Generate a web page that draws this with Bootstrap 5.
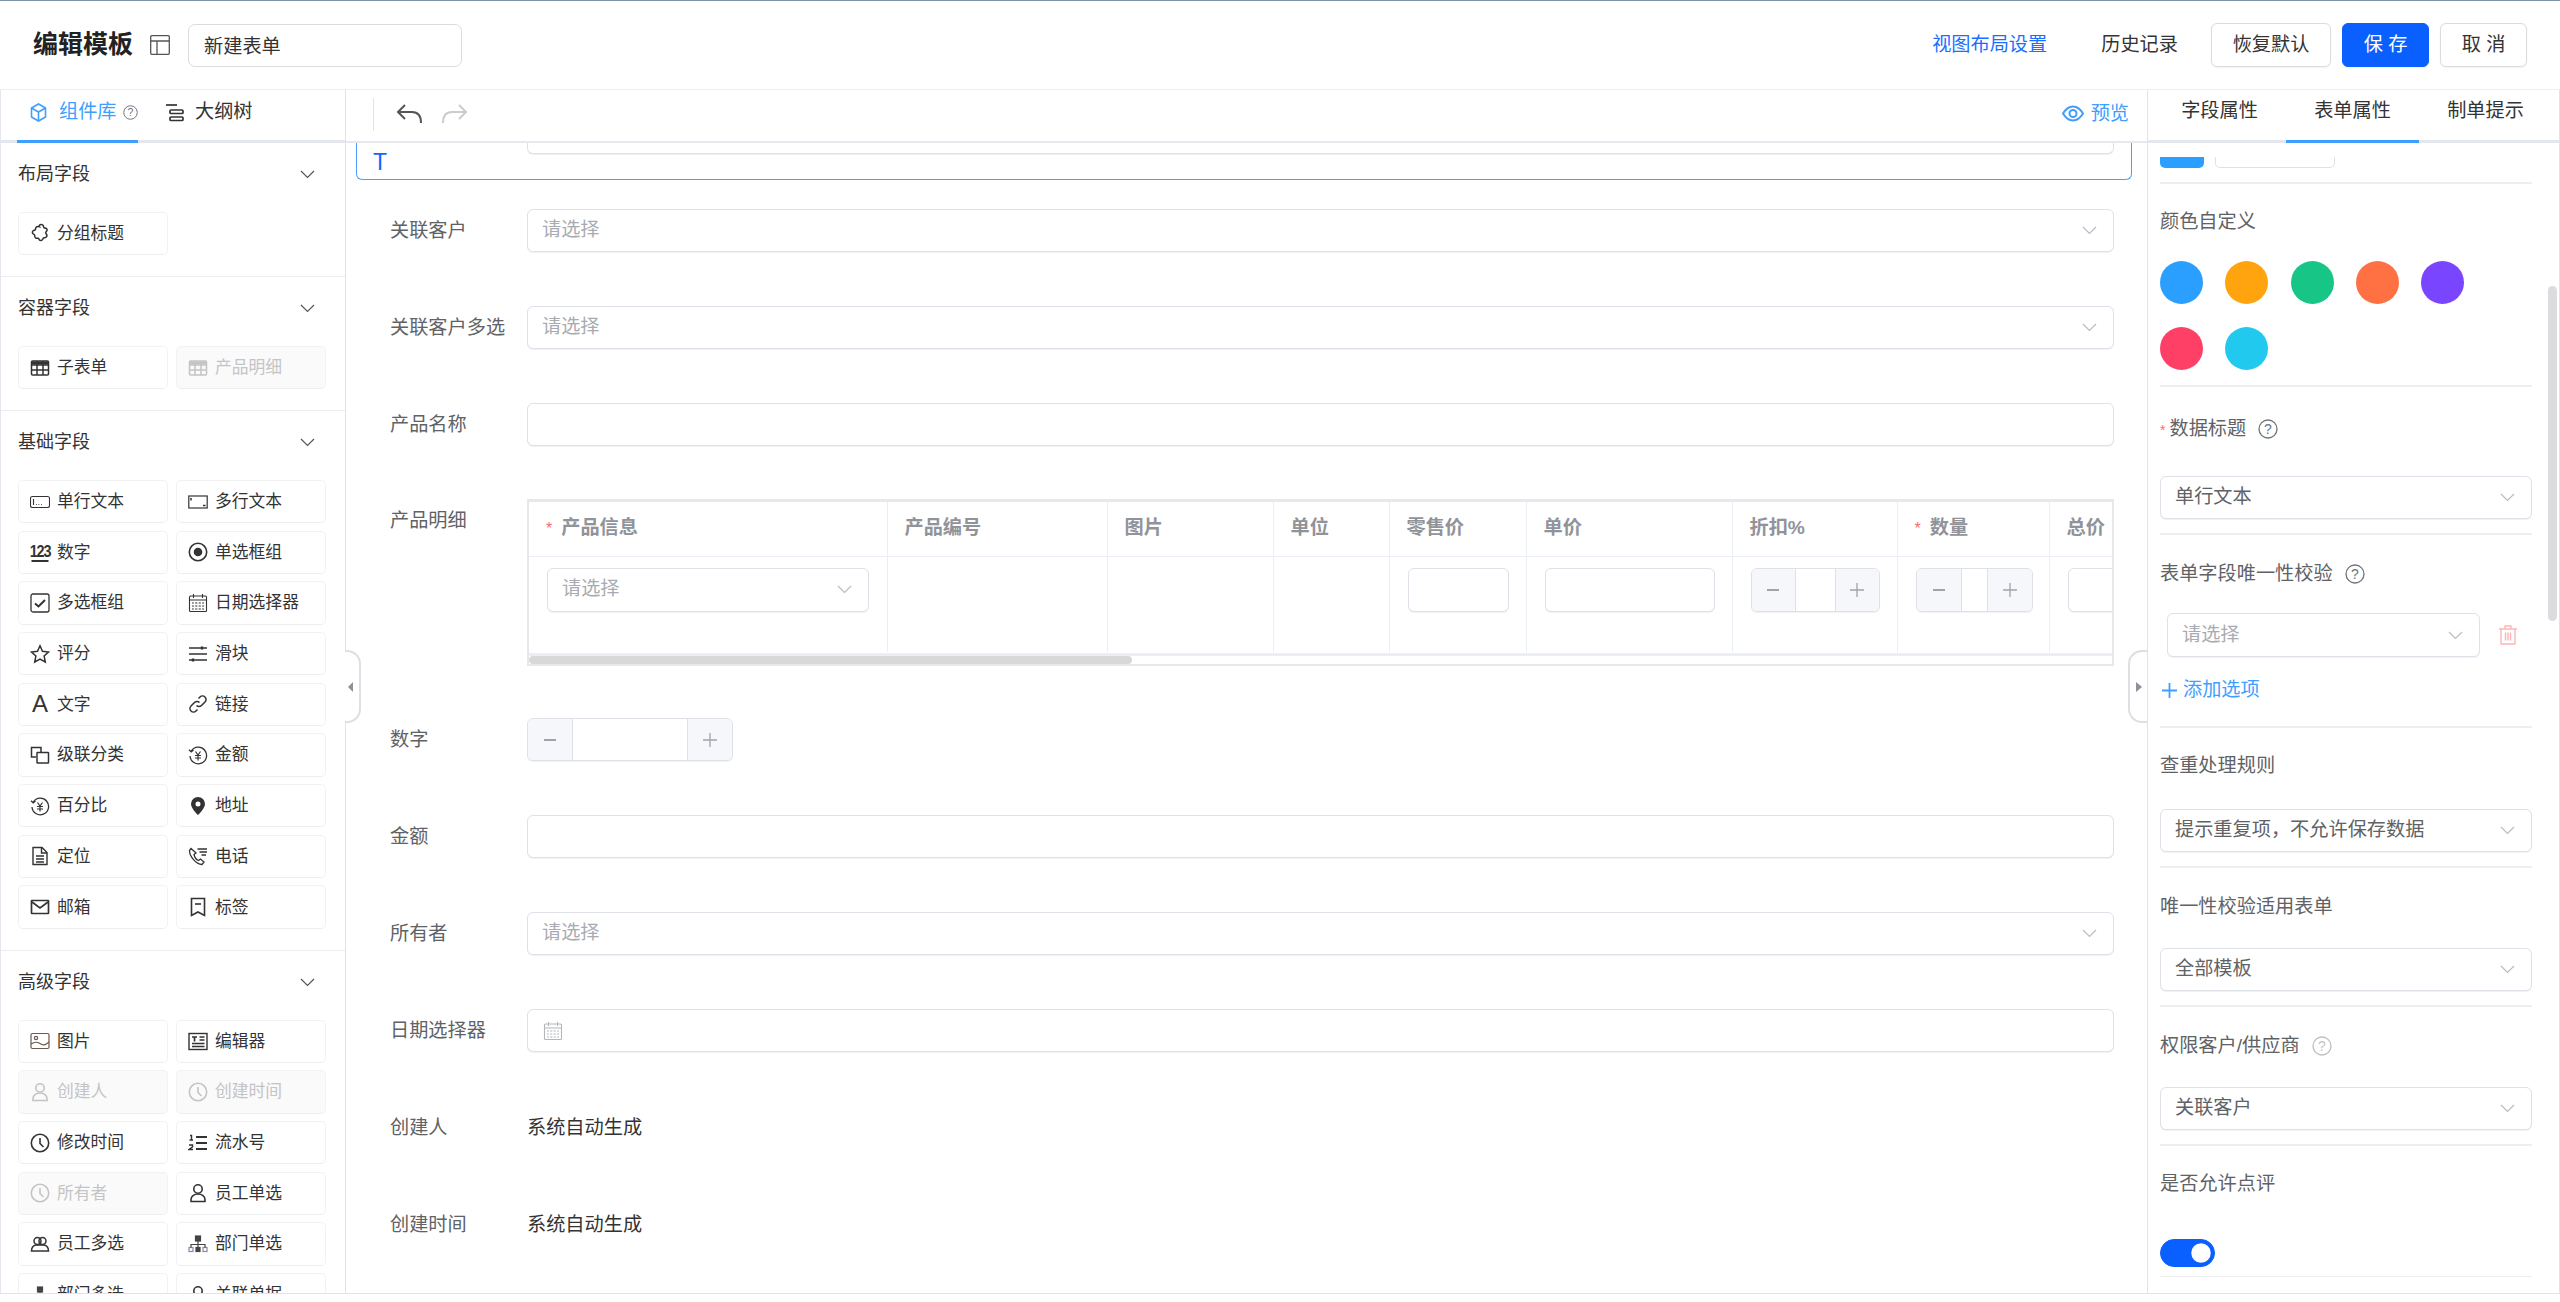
<!DOCTYPE html>
<html lang="zh-CN">
<head>
<meta charset="utf-8">
<title>编辑模板</title>
<link href="https://cdn.jsdelivr.net/npm/bootstrap@5.3.0/dist/css/bootstrap.min.css" rel="stylesheet">
<style>
:root{--ln:#dfe1e8;--sep:#eeeeef;--blue:#409eff;--royal:#0a60ff;--lab:#606266;}
html,body{height:1302px;overflow:hidden;background:#fff;}
body{font-family:"Liberation Sans","Noto Sans CJK SC",sans-serif;font-size:19.2px;color:#333;}
.frame{height:1294px;border-top:1px solid #7d97a8;border-bottom:1px solid #e3e3e5;}
.topbar{height:89px;border-bottom:1px solid #eceef2;padding-left:33px;padding-right:33px;}
.page-title{font-size:25px;font-weight:700;color:#222;margin-right:17px;white-space:nowrap;}
.tpl-name{width:274px;height:43px;margin-left:18px;font-size:19.2px;padding:0 15px;border-color:#dcdcdf;border-radius:7px;color:#333;}
.top-link{font-size:19.2px;color:#1a6fff;text-decoration:none;margin-right:54px;}
.top-link.plain{color:#333;margin-right:22px;}
.top-btn{height:44px;font-size:19.2px;border:1px solid #dcdcdf;border-radius:6px;color:#333;padding:0;margin-left:11px;background:#fff;box-shadow:0 1px 2px rgba(0,0,0,.05);}
.w120{width:120px;}.w87{width:87px;}
.top-btn.go{background:var(--royal);border-color:var(--royal);color:#fff;}
.workzone{flex:1;min-height:0;}
.leftpane{width:346px;border-left:1px solid #e4e7ed;border-right:1px solid #e2e3e6;overflow:hidden;flex:none;}
.rightpane{width:413px;border-left:1px solid #e2e3e6;border-right:1px solid #e2e3e6;overflow:hidden;flex:none;}
.midpane{flex:1;min-width:0;overflow:hidden;}
.pane-tabs{height:53px;border-bottom:3px solid #e4e7ed;flex-wrap:nowrap;}
.pane-tabs .nav-link{height:53px;padding:0 0 6px;color:#333;font-size:19.2px;display:flex;align-items:center;justify-content:flex-start;border-bottom:3px solid transparent;white-space:nowrap;}
.pane-tabs .nav-link svg{flex:none;}
.pane-tabs .nav-link.active{border-bottom-color:var(--blue);}
.lt-a{width:121px;margin-left:16px;color:var(--blue)!important;padding-left:13px!important;}
.lt-a .tab-lb{margin-left:12px;margin-right:6px;}
.lt-b{width:100px;margin-left:27px;gap:11px;}
.rt-nav{padding-left:5px;}
.rt-tab{width:133px;justify-content:center!important;padding-bottom:8px!important;}
.midbar{height:53px;border-bottom:2px solid #e6e8ee;padding-right:18px;padding-bottom:3px;}
.vbar{width:1px;height:33px;background:#e3e3e6;margin-left:27px;margin-right:22px;}
.preview-l{color:var(--blue);font-size:19.2px;text-decoration:none;gap:7px;}
.fld-sec{padding:15.8px 0 21px 17px;border-bottom:1px solid #ebedf3;}
.sec-head{height:32px;font-size:18px;color:#333;padding-right:30px;margin-bottom:21px;}
.fld-grid{display:grid;grid-template-columns:150px 150px;gap:7.4px 8px;}
.chip{height:43.3px;border:1px solid #f2f2f4;border-bottom-color:#edeef1;border-radius:5px;font-size:16.8px;color:#333;padding-left:11px;gap:7px;white-space:nowrap;background:#fff;}
.chip svg,.chip .gl{width:20px;height:20px;flex:none;}
.chip.off{background:#fafafa;color:#c4c4c6;}
.gl{display:flex;align-items:center;justify-content:center;line-height:1;}
.gl-123{font-size:17px;font-weight:700;letter-spacing:-1.5px;border-bottom:2px solid #333;height:19px!important;transform:scaleX(.85);}
.gl-a{font-size:24px;}
.cv-top{height:37px;margin:0 15px 29px 10px;border:1px solid #4a9fff;border-top:0;border-radius:0 0 6px 6px;padding-left:16px;}
.cv-t{width:154px;color:#1466ff;font-size:23px;line-height:1;padding-top:8px;}
.cv-stub{flex:1;height:11px;margin-right:17px;border:1px solid var(--ln);border-top:0;border-radius:0 0 6px 6px;box-shadow:0 1px 0 #f1f1f4;}
.fm-row{margin-left:44px;margin-right:33px;margin-bottom:54px;}
.fm-row.tight{margin-bottom:53px;}
.fm-row.short{margin-bottom:52px;}
.fm-lab{width:137px;flex:none;height:43px;line-height:43px;color:var(--lab);font-size:19.2px;white-space:nowrap;}
.fm-auto{height:43px;line-height:43px;color:#333;font-size:19.2px;}
.fld{height:43px;font-size:19.2px;padding:0 44px 0 14px;border:1px solid var(--ln);border-radius:6px;color:var(--lab);box-shadow:0 1px 0 #f2f2f5;background-color:#fff;}
.form-select.fld{background-image:url("data:image/svg+xml,%3Csvg xmlns='http://www.w3.org/2000/svg' viewBox='0 0 15 9'%3E%3Cpath d='M1 1l6.500 6.500L14 1' fill='none' stroke='%23b8bcc4' stroke-width='1.200'/%3E%3C/svg%3E");background-size:15px 9px;background-position:right 16px center;}
.fld.ph{color:#a8abb2;}
.fld-date{padding-left:15px;color:#b4b6bb;}
.tbl-wrap{width:1587px;height:167px;overflow:hidden;border:2px solid #e8e8ea;border-top-width:3px;border-right-width:2px;}
.tbl-clip{overflow:hidden;height:151px;}
.dtl{table-layout:fixed;width:1640px;margin:0;border-collapse:collapse;}
.c1{width:358px}.c2{width:220px}.c3{width:166px}.c4{width:116px}.c5{width:137px}.c6{width:206px}.c7{width:165px}.c8{width:152px}.c9{width:120px}
.dtl th,.dtl td{border:0;border-right:1px solid #ebeef5;padding:0;vertical-align:top;}
.dtl th{height:54px;border-bottom:1px solid #ebeef5;font-size:19.2px;color:#909399;font-weight:700;vertical-align:middle;padding-left:17px;white-space:nowrap;}
.dtl td{height:96px;padding-top:11px;padding-left:18px;padding-right:0;}
.req{color:#f56c6c;font-weight:400;font-size:16px;margin-right:9px;}
.tb-sel{width:322px;height:44px;}
.tb-in{height:44px;padding:0;}
.w101{width:101px;}.w170{width:170px;}.w130{width:120px;}
.hscroll{height:8px;border-top:0;}
.hs-rule{height:3px;background:#ebeef5;}
.hs-thumb{height:8px;background:#d8d8d8;border-radius:4px;}
.stepper{height:44px;border:1px solid var(--ln);border-radius:6px;overflow:hidden;background:#fff;box-shadow:0 1px 0 #f2f2f5;}
.stepper .stp{flex:none;background:#f5f7fa;display:flex;align-items:center;justify-content:center;}
.stepper .stp:first-child{border-right:1px solid var(--ln);}
.stepper .stp:last-child{border-left:1px solid var(--ln);}
.st-main{width:206px;height:43px;}.st-main .stp{width:45px;}
.st-sm{width:129px;}.st-sm .stp{width:44px;}
.st-xs{width:117px;}.st-xs .stp{width:45px;}
.stp-fill{flex:1;}
.rp-body{padding:0 27px 0 12px;position:relative;}
.sep{border-top:2px solid var(--sep);}
.sep.thin{border-top-width:1px;}
.stub-a{width:44px;height:11px;background:#2a9fff;border-radius:0 0 5px 5px;}
.stub-b{width:120px;height:11px;border:1px solid var(--ln);border-top:0;border-radius:0 0 5px 5px;}
.stubs{gap:11px;margin-top:14px;}
.rlab{height:30px;line-height:30px;color:var(--lab);font-size:19.2px;white-space:nowrap;}
.rlab .rq{color:#f56c6c;font-size:14px;margin-right:4px;}
.rlab svg{margin-left:12px;}
.swatches{display:flex;flex-wrap:wrap;width:340px;column-gap:22.3px;row-gap:23px;}
.swatch{width:43px;height:43px;border-radius:50%;}
.s1{background:#2a9fff}.s2{background:#ffa30f}.s3{background:#17c586}.s4{background:#ff7043}.s5{background:#7a45ff}.s6{background:#ff4066}.s7{background:#22c9ef}
.add-opt{height:30px;color:var(--blue);font-size:19.2px;gap:6px;margin-left:2px;}
.uq-sel{margin-left:7px;width:313px;}
.uq-sel .fld{height:44px;}
.trash{margin-left:19px;}
.m9{margin-top:9px}.m14{margin-top:14px}.m15{margin-top:15px}.m16{margin-top:16px}.m17{margin-top:17px}.m18{margin-top:18px}.m21{margin-top:21px}.m23{margin-top:23px}.m24{margin-top:24px}.m25{margin-top:25px}.m26{margin-top:26px}.m27{margin-top:27px}.m28{margin-top:28px}.m32{margin-top:32px}.m40{margin-top:40px}
.sw-wrap .form-check-input{width:55px;height:28px;margin:0;background-color:var(--royal);border-color:var(--royal);float:none;box-shadow:none;}
.rp-thumb{position:absolute;left:400px;top:129px;width:9px;height:335px;background:#dcdcdf;border-radius:5px;}
.edge{position:absolute;top:560px;height:73px;background:#fff;border:2px solid #dedfe2;display:flex;align-items:center;}
.edge-l{left:345px;width:16px;border-left:0;border-radius:0 14px 14px 0;padding-left:3px;}
.edge-r{left:2128px;width:19px;border-right:0;border-radius:14px 0 0 14px;padding-left:6px;}
.tri-l{width:0;height:0;border:5px solid transparent;border-left:0;border-right:5px solid #8c9098;}
.tri-r{width:0;height:0;border:5px solid transparent;border-right:0;border-left:6px solid #8c9098;}
</style>
</head>
<body>
<svg width="0" height="0" class="d-block" aria-hidden="true">
<defs>
<g id="i-group" fill="none" stroke="currentColor" stroke-width="1.500"><path d="M9 3.500a2.300 2.300 0 0 1 4.300-.8c.4.800.2 1.600.7 2.100.6.500 1.700.1 2.500.8 1 .9.700 2.400-.5 3.200-.5.400-.5.900-.1 1.400 1 1.200 1.300 3 .2 4-.8.700-1.700.5-2.300.5-.6.100-.7.900-1.100 1.700-.8 1.400-2.700 1.500-3.500.3-.4-.6-.3-1.300-.9-1.500-.8-.2-1.900.3-2.800-.4-.9-.8-.7-2-.8-2.600-.1-.6-1-.8-1.700-1.500-1-1-.7-2.500.4-3.100.7-.4 1.500-.3 1.900-.8.400-.6.100-1.400.6-2.200.7-1 2-1.100 3.300-.9z"/></g>
<g id="i-table" fill="none" stroke="currentColor" stroke-width="1.500"><rect x="1.500" y="3" width="17" height="14" rx="1"/><path d="M1.500 7h17M1.500 12h17M7 3v14M13 3v14" /><path d="M1.500 5h17" stroke-width="3"/></g>
<g id="i-input" fill="none" stroke="currentColor" stroke-width="1.100"><rect x=".5" y="4.500" width="19" height="11" rx="2"/><path d="M3.500 7v6" /><path d="M6 12.500h.8M8.500 12.500h.8M11 12.500h.8" /></g>
<g id="i-text" fill="none" stroke="currentColor" stroke-width="1.200"><rect x=".8" y="4" width="18.400" height="12"/><path d="M3 6v2.500M15 13.500h2.500" stroke-width="1.500"/></g>
<g id="i-radio" fill="none" stroke="currentColor"><circle cx="10" cy="10" r="8.700" stroke-width="1.600"/><circle cx="10" cy="10" r="4.300" fill="currentColor" stroke="none"/></g>
<g id="i-check" fill="none" stroke="currentColor"><rect x="1" y="1" width="18" height="18" rx="2" stroke-width="1.300"/><path d="M5 10.500l3.500 3L15 7" stroke-width="2"/></g>
<g id="i-cal" fill="none" stroke="currentColor" stroke-width="1.100"><rect x="1.500" y="3" width="17" height="15.500" rx="1"/><path d="M1.500 7h17M5.500 1v4M14.500 1v4M4 10h12M4 13h12M4 16h12" /><path d="M6.500 9v8M10 9v8M13.500 9v8" stroke="#fff" stroke-width="1.300"/></g>
<g id="i-star" fill="none" stroke="currentColor" stroke-width="1.500"><path d="M10 1.800l2.500 5.500 6 .7-4.400 4 1.200 6L10 15l-5.300 3 1.200-6-4.400-4 6-.7z"/></g>
<g id="i-slider" fill="none" stroke="currentColor" stroke-width="1.400"><path d="M1 4h18M1 10h18M1 16h18"/><path d="M14 2.500v3M5 14.500v3" stroke-width="2.400"/></g>
<g id="i-link" fill="none" stroke="currentColor" stroke-width="1.500"><path d="M8.500 11.500a3.500 3.500 0 0 0 5 0l3.500-3.500a3.500 3.500 0 0 0-5-5l-1.500 1.500"/><path d="M11.500 8.500a3.500 3.500 0 0 0-5 0L3 12a3.500 3.500 0 0 0 5 5l1.500-1.500"/></g>
<g id="i-casc" fill="none" stroke="currentColor" stroke-width="1.500"><path d="M6 12H1.500V2.500H11V7"/><rect x="7" y="7.500" width="11.500" height="10.500" rx=".5"/></g>
<g id="i-money" fill="none" stroke="currentColor" stroke-width="1.300"><path d="M3.300 6A8.300 8.300 0 1 1 2 11"/><path d="M1 4.800l2.200 2 2.300-1.800" /><path d="M7.500 6.500l2.500 3.500 2.500-3.500M7 10.500h6M7 13h6M10 10v5.500" stroke-width="1.200"/></g>
<g id="i-pin"><path fill="currentColor" fill-rule="evenodd" d="M10 1a7 7 0 0 0-7 7c0 4.500 7 11 7 11s7-6.500 7-11a7 7 0 0 0-7-7zm0 4.500a2.500 2.500 0 1 1 0 5 2.500 2.500 0 0 1 0-5z"/></g>
<g id="i-doc" fill="none" stroke="currentColor" stroke-width="1.400"><path d="M3 1.500h9l5 5v12H3z"/><path d="M11.500 1.500v5.500H17M6 10h8M6 13h8M6 16h8"/></g>
<g id="i-phone" fill="none" stroke="currentColor" stroke-width="1.300"><path d="M3 2.500L1.500 4.500c0 6 6.500 13.500 12.500 14l2-2.500-3.500-3-2 1.500C8 13.500 6.500 11 6 8.500L8 7z"/><path d="M9.500 3H19M11.500 6H19M13.500 9H18"/></g>
<g id="i-mail" fill="none" stroke="currentColor" stroke-width="1.700"><rect x="1.500" y="3.500" width="17" height="13" rx=".5"/><path d="M2 5l8 6 8-6"/></g>
<g id="i-mark" fill="none" stroke="currentColor" stroke-width="1.600"><path d="M3.500 1.500h13v17l-6.500-3.500-6.500 3.500z"/><path d="M7 7h6"/></g>
<g id="i-img" fill="none" stroke="#6b5a4e" stroke-width="1.200"><rect x="1" y="2.500" width="18" height="15" rx="1.500"/><circle cx="6" cy="7" r="1.600"/><path d="M1 13c4-2.500 6-2.500 9-.5s5 2 9-1.500"/></g>
<g id="i-edit" fill="none" stroke="currentColor" stroke-width="1.400"><rect x="1" y="2.500" width="18" height="16"/><path d="M11.500 6h5M11.500 9h5M4 12.500h12.500M4 15.500h12.500"/><path d="M4 6h5M6.500 6v4.500" stroke-width="1.700"/></g>
<g id="i-user" fill="none" stroke="currentColor" stroke-width="1.600"><circle cx="10" cy="6" r="4.200"/><path d="M3 18.500v-2c0-3 3-5.500 7-5.500s7 2.500 7 5.500v2z"/></g>
<g id="i-clock" fill="none" stroke="currentColor" stroke-width="1.600"><circle cx="10" cy="10" r="8.700"/><path d="M10 5v5.500l3.500 3.500"/></g>
<g id="i-list" fill="none" stroke="currentColor"><path d="M8 4h11M8 10h11M8 16h11" stroke-width="2"/><path d="M2 2.500h1.500V7M1.500 7h3.500M1 12h3.500v2l-3.500 2.500h4" stroke-width="1.400"/></g>
<g id="i-users" fill="none" stroke="currentColor" stroke-width="1.500"><circle cx="7.500" cy="7" r="3.500"/><circle cx="12.500" cy="7" r="3.500"/><path d="M1.500 17c0-3.500 2-5.500 4.500-6h8c2.500.5 4.500 2.500 4.500 6z"/></g>
<g id="i-org" fill="none" stroke="#444" stroke-width="1.200"><rect x="7.500" y="2" width="5" height="5" fill="#444"/><rect x="8" y="13.500" width="4" height="4" fill="#444"/><rect x="1" y="13.500" width="4" height="4" stroke="#8a86a8"/><rect x="15" y="13.500" width="4" height="4" stroke="#8a86a8"/><path d="M10 7v6.500M3 13.500v-3h14v3"/></g>
<g id="i-help" fill="none" stroke="currentColor"><circle cx="10" cy="10" r="9" stroke-width="1.300"/><text x="10" y="15" text-anchor="middle" font-size="14" fill="currentColor" stroke="none" font-family="Liberation Sans">?</text></g>
<g id="i-minus"><path d="M2 8h12" stroke="#a0a3aa" stroke-width="1.800"/></g>
<g id="i-plus"><path d="M8 1v14M1 8h14" stroke="#a0a3aa" stroke-width="1.300"/></g>
<g id="i-chev"><path d="M1 1l6.500 6.500L14 1" fill="none" stroke="#555" stroke-width="1.200"/></g>
</defs>
</svg>

<div class="frame d-flex flex-column">
  <header class="topbar d-flex align-items-center flex-shrink-0">
    <span class="page-title">编辑模板</span>
    <svg width="20" height="20" viewBox="0 0 20 20" fill="none" stroke="#555" stroke-width="1.300"><rect x=".7" y=".7" width="18.600" height="18.600" rx="1"/><path d="M.7 6h18.600M7 6v13.300"/></svg>
    <input class="form-control tpl-name" type="text" value="新建表单">
    <div class="ms-auto d-flex align-items-center">
      <a class="top-link" href="#">视图布局设置</a>
      <a class="top-link plain" href="#">历史记录</a>
      <button class="btn top-btn w120" type="button">恢复默认</button>
      <button class="btn top-btn go w87" type="button">保 存</button>
      <button class="btn top-btn w87" type="button">取 消</button>
    </div>
  </header>

  <div class="workzone d-flex position-relative">
    <aside class="leftpane">
      <nav class="nav pane-tabs">
        <a class="nav-link active lt-a" href="#">
          <svg width="17" height="19" viewBox="0 0 17 19" fill="none" stroke="#409eff" stroke-width="1.600"><path d="M8.500 1l7 4v9l-7 4-7-4V5z"/><path d="M1.500 5l7 4 7-4M8.500 9v9"/></svg>
          <span class="tab-lb">组件库</span>
          <svg width="15" height="15" viewBox="0 0 20 20" class="text-secondary"><use href="#i-help"/></svg>
        </a>
        <a class="nav-link lt-b" href="#">
          <svg width="19" height="19" viewBox="0 0 19 19" fill="none" stroke="#333" stroke-width="1.700"><path d="M1 2h11"/><rect x="5" y="7" width="13" height="3.500" rx="1"/><rect x="5" y="14" width="13" height="3.500" rx="1"/></svg>
          大纲树
        </a>
      </nav>

      <section class="fld-sec">
        <div class="sec-head d-flex align-items-center justify-content-between">布局字段<svg width="15" height="9" viewBox="0 0 15 9"><use href="#i-chev"/></svg></div>
        <div class="fld-grid">
          <div class="chip d-flex align-items-center"><svg viewBox="0 0 20 20"><use href="#i-group"/></svg>分组标题</div>
        </div>
      </section>
      <section class="fld-sec">
        <div class="sec-head d-flex align-items-center justify-content-between">容器字段<svg width="15" height="9" viewBox="0 0 15 9"><use href="#i-chev"/></svg></div>
        <div class="fld-grid">
          <div class="chip d-flex align-items-center"><svg viewBox="0 0 20 20"><use href="#i-table"/></svg>子表单</div>
          <div class="chip off d-flex align-items-center"><svg viewBox="0 0 20 20"><use href="#i-table"/></svg>产品明细</div>
        </div>
      </section>
      <section class="fld-sec">
        <div class="sec-head d-flex align-items-center justify-content-between">基础字段<svg width="15" height="9" viewBox="0 0 15 9"><use href="#i-chev"/></svg></div>
        <div class="fld-grid">
          <div class="chip d-flex align-items-center"><svg viewBox="0 0 20 20"><use href="#i-input"/></svg>单行文本</div>
          <div class="chip d-flex align-items-center"><svg viewBox="0 0 20 20"><use href="#i-text"/></svg>多行文本</div>
          <div class="chip d-flex align-items-center"><span class="gl gl-123">123</span>数字</div>
          <div class="chip d-flex align-items-center"><svg viewBox="0 0 20 20"><use href="#i-radio"/></svg>单选框组</div>
          <div class="chip d-flex align-items-center"><svg viewBox="0 0 20 20"><use href="#i-check"/></svg>多选框组</div>
          <div class="chip d-flex align-items-center"><svg viewBox="0 0 20 20"><use href="#i-cal"/></svg>日期选择器</div>
          <div class="chip d-flex align-items-center"><svg viewBox="0 0 20 20"><use href="#i-star"/></svg>评分</div>
          <div class="chip d-flex align-items-center"><svg viewBox="0 0 20 20"><use href="#i-slider"/></svg>滑块</div>
          <div class="chip d-flex align-items-center"><span class="gl gl-a">A</span>文字</div>
          <div class="chip d-flex align-items-center"><svg viewBox="0 0 20 20"><use href="#i-link"/></svg>链接</div>
          <div class="chip d-flex align-items-center"><svg viewBox="0 0 20 20"><use href="#i-casc"/></svg>级联分类</div>
          <div class="chip d-flex align-items-center"><svg viewBox="0 0 20 20"><use href="#i-money"/></svg>金额</div>
          <div class="chip d-flex align-items-center"><svg viewBox="0 0 20 20"><use href="#i-money"/></svg>百分比</div>
          <div class="chip d-flex align-items-center"><svg viewBox="0 0 20 20"><use href="#i-pin"/></svg>地址</div>
          <div class="chip d-flex align-items-center"><svg viewBox="0 0 20 20"><use href="#i-doc"/></svg>定位</div>
          <div class="chip d-flex align-items-center"><svg viewBox="0 0 20 20"><use href="#i-phone"/></svg>电话</div>
          <div class="chip d-flex align-items-center"><svg viewBox="0 0 20 20"><use href="#i-mail"/></svg>邮箱</div>
          <div class="chip d-flex align-items-center"><svg viewBox="0 0 20 20"><use href="#i-mark"/></svg>标签</div>
        </div>
      </section>
      <section class="fld-sec border-0">
        <div class="sec-head d-flex align-items-center justify-content-between">高级字段<svg width="15" height="9" viewBox="0 0 15 9"><use href="#i-chev"/></svg></div>
        <div class="fld-grid">
          <div class="chip d-flex align-items-center"><svg viewBox="0 0 20 20"><use href="#i-img"/></svg>图片</div>
          <div class="chip d-flex align-items-center"><svg viewBox="0 0 20 20"><use href="#i-edit"/></svg>编辑器</div>
          <div class="chip off d-flex align-items-center"><svg viewBox="0 0 20 20"><use href="#i-user"/></svg>创建人</div>
          <div class="chip off d-flex align-items-center"><svg viewBox="0 0 20 20"><use href="#i-clock"/></svg>创建时间</div>
          <div class="chip d-flex align-items-center"><svg viewBox="0 0 20 20"><use href="#i-clock"/></svg>修改时间</div>
          <div class="chip d-flex align-items-center"><svg viewBox="0 0 20 20"><use href="#i-list"/></svg>流水号</div>
          <div class="chip off d-flex align-items-center"><svg viewBox="0 0 20 20"><use href="#i-clock"/></svg>所有者</div>
          <div class="chip d-flex align-items-center"><svg viewBox="0 0 20 20"><use href="#i-user"/></svg>员工单选</div>
          <div class="chip d-flex align-items-center"><svg viewBox="0 0 20 20"><use href="#i-users"/></svg>员工多选</div>
          <div class="chip d-flex align-items-center"><svg viewBox="0 0 20 20"><use href="#i-org"/></svg>部门单选</div>
          <div class="chip d-flex align-items-center"><svg viewBox="0 0 20 20"><use href="#i-org"/></svg>部门多选</div>
          <div class="chip d-flex align-items-center"><svg viewBox="0 0 20 20"><use href="#i-user"/></svg>关联单据</div>
        </div>
      </section>
    </aside>

    <main class="midpane">
      <div class="midbar d-flex align-items-center">
        <span class="vbar"></span>
        <svg width="28" height="22" viewBox="0 0 28 22" fill="none" stroke="#555" stroke-width="2"><path d="M9 2L2 9l7 7"/><path d="M2 9h14c6 0 9 4 9 11"/></svg>
        <svg class="ms-3" width="28" height="22" viewBox="0 0 28 22" fill="none" stroke="#ccc" stroke-width="2"><path d="M19 2l7 7-7 7"/><path d="M26 9H12c-6 0-9 4-9 11"/></svg>
        <a class="preview-l ms-auto d-flex align-items-center" href="#">
          <svg width="22" height="17" viewBox="0 0 22 17" fill="none" stroke="#409eff" stroke-width="2"><path d="M1 8.500C4 3.500 7 1.500 11 1.500s7 2 10 7c-3 5-6 7-10 7s-7-2-10-7z"/><circle cx="11" cy="8.500" r="3.500"/></svg>
          预览
        </a>
      </div>

      <div class="cv-top d-flex">
        <span class="cv-t">T</span>
        <span class="cv-stub"></span>
      </div>

      <div class="fm-row d-flex"><label class="fm-lab">关联客户</label><select class="form-select fld ph"><option>请选择</option></select></div>
      <div class="fm-row d-flex"><label class="fm-lab">关联客户多选</label><select class="form-select fld ph"><option>请选择</option></select></div>
      <div class="fm-row tight d-flex"><label class="fm-lab">产品名称</label><input class="form-control fld" type="text"></div>

      <div class="fm-row short d-flex">
        <label class="fm-lab">产品明细</label>
        <div class="tbl-wrap">
          <div class="tbl-clip">
            <table class="table dtl">
              <colgroup><col class="c1"><col class="c2"><col class="c3"><col class="c4"><col class="c5"><col class="c6"><col class="c7"><col class="c8"><col class="c9"></colgroup>
              <thead><tr>
                <th><span class="req">*</span>产品信息</th><th>产品编号</th><th>图片</th><th>单位</th><th>零售价</th><th>单价</th><th>折扣%</th><th><span class="req">*</span>数量</th><th>总价</th>
              </tr></thead>
              <tbody><tr>
                <td><select class="form-select fld ph tb-sel"><option>请选择</option></select></td>
                <td></td><td></td><td></td>
                <td><input class="form-control fld tb-in w101" type="text"></td>
                <td><input class="form-control fld tb-in w170" type="text"></td>
                <td><div class="stepper st-sm d-flex"><span class="stp"><svg width="16" height="16"><use href="#i-minus"/></svg></span><span class="stp-fill"></span><span class="stp"><svg width="16" height="16"><use href="#i-plus"/></svg></span></div></td>
                <td><div class="stepper st-xs d-flex"><span class="stp"><svg width="16" height="16"><use href="#i-minus"/></svg></span><span class="stp-fill"></span><span class="stp"><svg width="16" height="16"><use href="#i-plus"/></svg></span></div></td>
                <td><input class="form-control fld tb-in w130" type="text"></td>
              </tr></tbody>
            </table>
          </div>
          <div class="hs-rule"></div>
          <div class="hscroll"><div class="hs-thumb" style="width:603px"></div></div>
        </div>
      </div>

      <div class="fm-row d-flex"><label class="fm-lab">数字</label><div class="stepper st-main d-flex"><span class="stp"><svg width="16" height="16"><use href="#i-minus"/></svg></span><span class="stp-fill"></span><span class="stp"><svg width="16" height="16"><use href="#i-plus"/></svg></span></div></div>
      <div class="fm-row d-flex"><label class="fm-lab">金额</label><input class="form-control fld" type="text"></div>
      <div class="fm-row d-flex"><label class="fm-lab">所有者</label><select class="form-select fld ph"><option>请选择</option></select></div>
      <div class="fm-row d-flex"><label class="fm-lab">日期选择器</label>
        <div class="form-control fld fld-date d-flex align-items-center"><svg width="20" height="20" viewBox="0 0 20 20"><use href="#i-cal"/></svg></div>
      </div>
      <div class="fm-row d-flex"><label class="fm-lab">创建人</label><div class="fm-auto">系统自动生成</div></div>
      <div class="fm-row d-flex"><label class="fm-lab">创建时间</label><div class="fm-auto">系统自动生成</div></div>
    </main>

    <aside class="rightpane">
      <nav class="nav pane-tabs rt-nav">
        <a class="nav-link rt-tab" href="#">字段属性</a>
        <a class="nav-link rt-tab active" href="#">表单属性</a>
        <a class="nav-link rt-tab" href="#">制单提示</a>
      </nav>
      <div class="rp-body">
        <div class="stubs d-flex"><span class="stub-a"></span><span class="stub-b"></span></div>
        <div class="sep m14"></div>

        <div class="rlab m23">颜色自定义</div>
        <div class="swatches m24">
          <span class="swatch s1"></span><span class="swatch s2"></span><span class="swatch s3"></span><span class="swatch s4"></span><span class="swatch s5"></span><span class="swatch s6"></span><span class="swatch s7"></span>
        </div>
        <div class="sep m15"></div>

        <div class="rlab m27"><span class="rq">*</span>数据标题<svg width="20" height="20" viewBox="0 0 20 20" class="text-secondary align-text-bottom"><use href="#i-help"/></svg></div>
        <select class="form-select fld m32"><option>单行文本</option></select>
        <div class="sep m14"></div>

        <div class="rlab m24">表单字段唯一性校验<svg width="20" height="20" viewBox="0 0 20 20" class="text-secondary align-text-bottom"><use href="#i-help"/></svg></div>
        <div class="d-flex align-items-center m24">
          <div class="uq-sel"><select class="form-select fld ph"><option>请选择</option></select></div>
          <svg class="trash" width="18" height="20" viewBox="0 0 18 20" fill="none" stroke="#fbb6b6" stroke-width="1.400"><path d="M0 4h18M6 4V1h6v3M2 4v15h14V4M6.500 7.500v8M9 7.500v8M11.500 7.500v8"/></svg>
        </div>
        <div class="add-opt d-flex align-items-center m18"><svg width="15" height="15" viewBox="0 0 15 15"><path d="M7.500 0v15M0 7.500h15" stroke="#409eff" stroke-width="1.800"/></svg>添加选项</div>
        <div class="sep m21"></div>

        <div class="rlab m23">查重处理规则</div>
        <select class="form-select fld m28"><option>提示重复项，不允许保存数据</option></select>
        <div class="sep m14"></div>

        <div class="rlab m24">唯一性校验适用表单</div>
        <select class="form-select fld m26"><option>全部模板</option></select>
        <div class="sep m14"></div>

        <div class="rlab m24">权限客户/供应商<svg width="20" height="20" viewBox="0 0 20 20" class="text-black-50 opacity-50 align-text-bottom"><use href="#i-help"/></svg></div>
        <select class="form-select fld m26"><option>关联客户</option></select>
        <div class="sep m14"></div>

        <div class="rlab m23">是否允许点评</div>
        <div class="form-check form-switch sw-wrap p-0 m40 d-flex"><input class="form-check-input" type="checkbox" role="switch" checked></div>
        <div class="sep thin m9"></div>
        <span class="rp-thumb"></span>
      </div>
    </aside>

    <span class="edge edge-l"><i class="tri-l"></i></span>
    <span class="edge edge-r"><i class="tri-r"></i></span>
  </div>
</div>
</body>
</html>
